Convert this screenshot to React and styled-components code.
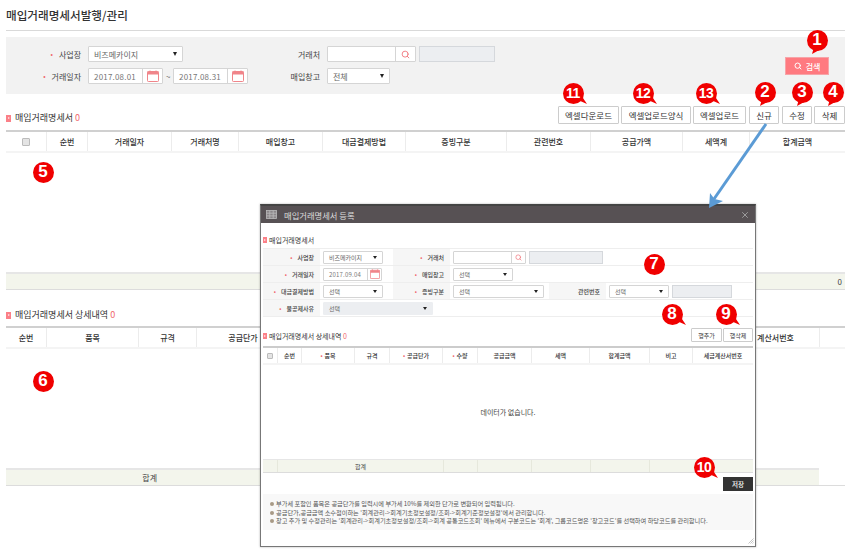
import React from "react";
import styled, { createGlobalStyle } from "styled-components";
import { Search, X } from "lucide-react";

const GlobalStyle = createGlobalStyle`
  html, body { margin: 0; padding: 0; background: #fff; }
  * { box-sizing: border-box; }
  body { font-family: "Noto Sans CJK KR", "Noto Sans", sans-serif; color: #333; }
`;

const Page = styled.div`
  position: relative;
  width: 850px;
  height: 554px;
  overflow: hidden;
  padding: 0 5px 0 6px;
`;

const PageTitle = styled.h1`
  margin: 0;
  height: 31px;
  padding-top: 5px;
  border-bottom: 1px solid #d9d9d9;
  font-size: 11.6px;
  line-height: 20px;
  font-weight: 500;
  color: #333;
`;

const SearchPanel = styled.div`
  margin-top: 6px;
  height: 57px;
  background: #f2f2f2;
  display: flex;
  justify-content: space-between;
  padding: 9px 16px 0 0;
`;

const SearchGrid = styled.div`
  display: grid;
  grid-template-columns: 75px 160px 65px auto;
  grid-auto-rows: 16px;
  column-gap: 7px;
  row-gap: 6px;
`;

const Label = styled.label`
  display: flex;
  align-items: center;
  justify-content: flex-end;
  font-size: 8px;
  color: #444;
  white-space: nowrap;
  ${(p) => p.$req && `&::before { content: "•"; color: #f0686e; margin-right: 6px; font-size: 7px; }`}
`;

const FieldRow = styled.div`
  display: flex;
  align-items: center;
  gap: 3px;
`;

const Select = styled.div`
  width: ${(p) => p.$w}px;
  height: ${(p) => p.$h || 16}px;
  display: flex;
  align-items: center;
  justify-content: space-between;
  padding: 0 5px;
  background: ${(p) => (p.$disabled ? "#eceef1" : "#fff")};
  border: 1px solid ${(p) => (p.$disabled ? "#eceef1" : "#d5d5d5")};
  border-radius: 1px;
  font-size: ${(p) => p.$fs || 8}px;
  color: #666;
  white-space: nowrap;
  &::after {
    content: "";
    border-left: ${(p) => (p.$fs ? 2 : 2.5)}px solid transparent;
    border-right: ${(p) => (p.$fs ? 2 : 2.5)}px solid transparent;
    border-top: ${(p) => (p.$fs ? 3 : 4)}px solid #222;
  }
`;

const InputGroup = styled.div`
  display: flex;
  height: ${(p) => p.$h || 16}px;
  width: ${(p) => p.$w}px;
  background: #fff;
  border: 1px solid #d5d5d5;
  border-radius: 1px;
  font-size: ${(p) => p.$fs || 8}px;
  color: #777;
  letter-spacing: 0.2px;
  align-items: center;
`;

const InputText = styled.span`
  flex: 1;
  padding-left: 5px;
  white-space: nowrap;
`;

const IconCell = styled.span`
  width: ${(p) => p.$w}px;
  height: 100%;
  display: flex;
  align-items: center;
  justify-content: center;
  border-left: 1px solid #d5d5d5;
  color: #f0757c;
`;

const ReadOnly = styled.div`
  width: ${(p) => p.$w}px;
  height: ${(p) => p.$h || 16}px;
  background: #eceef1;
  border: 1px solid #d5d8dc;
`;

const Dash = styled.span`
  width: 4px;
  text-align: center;
  font-size: 8px;
  color: #666;
`;

const SearchButton = styled.button`
  width: 44px;
  height: 18px;
  margin-top: 11px;
  border: 1px solid #f7a4a8;
  background: #ff7a80;
  color: #fff;
  font: 500 8px "Noto Sans CJK KR", sans-serif;
  display: flex;
  align-items: center;
  justify-content: center;
  gap: 4px;
  padding: 0;
`;

const ToolRow = styled.div`
  height: ${(p) => p.$h}px;
  display: flex;
  align-items: flex-end;
  justify-content: space-between;
  padding-bottom: ${(p) => p.$pb}px;
`;

const SectionTitle = styled.div`
  display: flex;
  align-items: center;
  gap: ${(p) => p.$gap ?? 4}px;
  font-size: ${(p) => p.$fs || 9}px;
  line-height: 12px;
  color: #333;
  white-space: nowrap;
  em { font-style: normal; color: #f0686e; }
`;

const Marker = styled.span`
  flex: none;
  width: ${(p) => p.$s || 5}px;
  height: ${(p) => (p.$s || 5) + 2}px;
  background: #fb8088;
  position: relative;
  &::after {
    content: "";
    position: absolute;
    left: 35%;
    top: 30%;
    border-left: 2px solid #ffe6e8;
    border-top: 1.5px solid transparent;
    border-bottom: 1.5px solid transparent;
  }
`;

const ButtonBar = styled.div`
  display: flex;
  gap: ${(p) => p.$gap ?? 2}px;
`;

const ToolButton = styled.button`
  width: ${(p) => p.$w}px;
  height: ${(p) => p.$h || 18}px;
  padding: 0;
  background: #fff;
  border: 1px solid #ccc;
  border-radius: 1px;
  font: ${(p) => p.$fs || 8.5}px "Noto Sans CJK KR", sans-serif;
  color: #333;
  margin-left: ${(p) => p.$ml || 0}px;
  white-space: nowrap;
`;

const HeadRow = styled.div`
  display: grid;
  grid-template-columns: ${(p) => p.$cols};
  height: ${(p) => p.$h}px;
  border-top: 2px solid ${(p) => p.$line || "#d0d0d0"};
  border-bottom: 2px solid #f4f4f4;
  box-sizing: content-box;
`;

const HeadCell = styled.div`
  display: flex;
  align-items: center;
  justify-content: center;
  font-size: ${(p) => p.$fs || 8}px;
  font-weight: 500;
  color: #333;
  border-right: 1px solid #ececec;
  white-space: nowrap;
  overflow: hidden;
  &:last-child { border-right: 0; }
  ${(p) => p.$req && `&::before { content: "•"; color: #f0686e; margin-right: 2px; }`}
`;

const Check = styled.span`
  width: ${(p) => p.$s}px;
  height: ${(p) => p.$s}px;
  background: #e4e4e4;
  border: 1px solid #bbb;
  border-radius: 1px;
`;

const ListBody = styled.div`
  height: ${(p) => p.$h}px;
`;

const TotalBar = styled.div`
  height: 17px;
  width: ${(p) => p.$w || "auto"};
  display: flex;
  align-items: center;
  justify-content: flex-end;
  background: #f3f5ec;
  border-top: 2px solid #e6e6e6;
  font-size: 8px;
  color: #444;
  padding-right: ${(p) => (p.$w ? 0 : 3)}px;
`;

const TotalLine = styled.div`
  border-bottom: 1px solid #dcdcdc;
`;

const TotalLabel = styled.span`
  width: 100%;
  padding-right: ${(p) => p.$pr}px;
  text-align: right;
`;

const Modal = styled.section`
  position: absolute;
  left: 260px;
  top: 204px;
  width: 496px;
  height: 343px;
  background: #fff;
  border: 1px solid #777;
  border-top: 2px solid #444;
  display: flex;
  flex-direction: column;
  box-shadow: 0 0 2px rgba(0, 0, 0, 0.3);
`;

const ModalHeader = styled.header`
  height: 17px;
  flex: none;
  background: #575154;
  display: flex;
  align-items: center;
  padding: 0 5px;
  gap: 7px;
  color: #ddd;
  font-size: 8.3px;
`;

const ModalTitle = styled.span`
  flex: 1;
`;

const ModalBody = styled.div`
  flex: 1;
  position: relative;
  padding: 0 2px;
  display: flex;
  flex-direction: column;
`;

const ModalSection = styled.div`
  height: 25px;
  padding-bottom: 2px;
  display: flex;
  align-items: flex-end;
  justify-content: space-between;
`;

const FormGrid = styled.div`
  display: grid;
  grid-template-columns: 57px 73px 57px 99px 57px 1fr;
  grid-auto-rows: 17px;
  border-top: 1px solid #eee;
`;

const FormLabel = styled.div`
  display: flex;
  align-items: center;
  justify-content: flex-end;
  padding-right: 6px;
  background: #f6f6f6;
  border-bottom: 1px solid #eee;
  font-size: 6px;
  font-weight: 500;
  color: #444;
  white-space: nowrap;
  ${(p) => p.$req && `&::before { content: "•"; color: #f0686e; margin-right: 5px; }`}
`;

const FormField = styled.div`
  grid-column: span ${(p) => p.$span || 1};
  display: flex;
  align-items: center;
  gap: 3px;
  padding-left: ${(p) => p.$pl ?? 3}px;
  border-bottom: 1px solid #eee;
`;

const SubHead = styled.div`
  height: 29px;
  padding-bottom: 4px;
  display: flex;
  align-items: flex-end;
  justify-content: space-between;
`;

const EmptyBody = styled.div`
  height: 94px;
  display: flex;
  align-items: center;
  justify-content: center;
  font-size: 7px;
  color: #444;
`;

const ModalTotal = styled.div`
  height: 12px;
  display: grid;
  grid-template-columns: 15px 166px 34px 54px 59px 59px 1fr;
  background: #f3f5ec;
  border-top: 1px solid #e6e6e6;
  border-bottom: 1px solid #dcdcdc;
  box-sizing: content-box;
`;

const ModalTotalCell = styled.div`
  display: flex;
  align-items: center;
  justify-content: center;
  font-size: 6px;
  color: #444;
  border-right: 1px solid #e6e8dc;
  &:last-child { border-right: 0; }
`;

const SaveRow = styled.div`
  display: flex;
  justify-content: flex-end;
  padding-top: 4px;
  height: 21px;
`;

const SaveButton = styled.button`
  width: 30px;
  height: 14px;
  padding: 0;
  border: 0;
  background: #333;
  color: #fff;
  font: 500 6.5px "Noto Sans CJK KR", sans-serif;
`;

const Notes = styled.div`
  height: 36px;
  background: #f8f8f8;
  padding: 6px 0 0 7px;
`;

const Note = styled.p`
  margin: 0;
  height: 8.5px;
  display: flex;
  align-items: center;
  gap: 2px;
  font-size: 6.2px;
  line-height: 8.5px;
  color: #555;
  white-space: nowrap;
  &::before {
    content: "";
    width: 4px;
    height: 4px;
    flex: none;
    border-radius: 50%;
    background: #a89a86;
  }
`;

const Grip = styled.svg`
  position: absolute;
  right: 1px;
  bottom: 2px;
`;

const BadgeBox = styled.div`
  position: absolute;
  left: ${(p) => p.$x - 10.5}px;
  top: ${(p) => p.$y - 10.5}px;
  width: 21px;
  height: 21px;
  display: flex;
  align-items: center;
  justify-content: center;
  font: 700 ${(p) => p.$fs}px "Liberation Sans", Arial, sans-serif;
  letter-spacing: ${(p) => p.$ls}px;
  color: #fff;
  z-index: 5;
`;

const BadgeShape = styled.svg`
  position: absolute;
  left: 0;
  top: 0;
  overflow: visible;
`;

const BadgeNum = styled.span`
  position: relative;
`;

const Arrow = styled.svg`
  position: absolute;
  left: 700px;
  top: 120px;
  z-index: 4;
`;

const tails = {
  right: "M15 17 L24 21 L18 12 Z",
  down: "M7 17 L5 24 L14 19 Z",
};

const Badge = ({ x, y, n, tail }) => {
  const s = String(n);
  return (
    <BadgeBox $x={x} $y={y} $fs={s.length > 1 ? 14 : 17} $ls={s.length > 1 ? -0.5 : 0}>
      <BadgeShape width="21" height="21" viewBox="0 0 21 21">
        <circle cx="10.5" cy="10.5" r="10.5" fill="#f00000" />
        {tail && <path d={tails[tail]} fill="#f00000" />}
      </BadgeShape>
      <BadgeNum>{s}</BadgeNum>
    </BadgeBox>
  );
};

const CalendarIcon = ({ size = 12 }) => (
  <svg width={size} height={size} viewBox="0 0 12 12" fill="none">
    <rect x="0.5" y="1.5" width="11" height="10" rx="0.8" fill="#fff" stroke="#f0858a" />
    <rect x="0.5" y="1.5" width="11" height="3" fill="#f0858a" />
    <path d="M3 0.5v2M9 0.5v2" stroke="#f0858a" />
  </svg>
);

const GridIcon = () => (
  <svg width="11" height="9" viewBox="0 0 11 9" fill="none" stroke="#bbb" strokeWidth="0.8">
    <rect x="0.5" y="0.5" width="10" height="8" fill="#8b8689" />
    <path d="M0.5 3.2h10M0.5 5.9h10M3.8 0.5v8M7.2 0.5v8" />
  </svg>
);

const topCols = "41px 41px 84px 67px 84px 83px 101px 84px 92px 67px 95px";
const topHeads = ["순번", "거래일자", "거래처명", "매입창고", "대금결제방법", "증빙구분", "관련번호", "공급가액", "세액계", "합계금액"];
// the columns between 공급단가 and 계산서번호 are covered by the popup
const detailCols = "41px 92px 58px 93px 442px 88px 25px";
const detailHeads = ["순번", "품목", "규격", "공급단가", "", "계산서번호", ""];
const modalCols = "15px 24px 53px 35px 53px 35px 54px 58px 60px 43px 60px";
const modalHeads = [
  ["순번"], ["품목", true], ["규격"], ["공급단가", true], ["수량", true],
  ["공급금액"], ["세액"], ["합계금액"], ["비고"], ["세금계산서번호"],
];

export default function App() {
  return (
    <Page>
      <GlobalStyle />
      <PageTitle>매입거래명세서발행/관리</PageTitle>

      <SearchPanel>
        <SearchGrid>
          <Label $req>사업장</Label>
          <Select $w={95}>비즈메카이지</Select>
          <Label>거래처</Label>
          <FieldRow>
            <InputGroup $w={89}>
              <InputText />
              <IconCell $w={20}><Search size={9} strokeWidth={2.4} /></IconCell>
            </InputGroup>
            <ReadOnly $w={76} />
          </FieldRow>
          <Label $req>거래일자</Label>
          <FieldRow>
            <InputGroup $w={76}>
              <InputText>2017.08.01</InputText>
              <IconCell $w={20}><CalendarIcon /></IconCell>
            </InputGroup>
            <Dash>~</Dash>
            <InputGroup $w={76}>
              <InputText>2017.08.31</InputText>
              <IconCell $w={20}><CalendarIcon /></IconCell>
            </InputGroup>
          </FieldRow>
          <Label>매입창고</Label>
          <Select $w={63}>전체</Select>
        </SearchGrid>
        <SearchButton>
          <Search size={8} strokeWidth={3} />
          검색
        </SearchButton>
      </SearchPanel>

      <ToolRow $h={36} $pb={6}>
        <SectionTitle>
          <Marker />
          <span>매입거래명세서 <em>0</em></span>
        </SectionTitle>
        <ButtonBar>
          <ToolButton $w={61}>엑셀다운로드</ToolButton>
          <ToolButton $w={70}>엑셀업로드양식</ToolButton>
          <ToolButton $w={53}>엑셀업로드</ToolButton>
          <ToolButton $w={30} $ml={1}>신규</ToolButton>
          <ToolButton $w={30} $ml={1}>수정</ToolButton>
          <ToolButton $w={31}>삭제</ToolButton>
        </ButtonBar>
      </ToolRow>

      <HeadRow $cols={topCols} $h={19}>
        <HeadCell><Check $s={8} /></HeadCell>
        {topHeads.map((h) => <HeadCell key={h}>{h}</HeadCell>)}
      </HeadRow>
      <ListBody $h={119} />
      <TotalLine>
        <TotalBar><span>0</span></TotalBar>
      </TotalLine>

      <ToolRow $h={36} $pb={5}>
        <SectionTitle>
          <Marker />
          <span>매입거래명세서 상세내역 <em>0</em></span>
        </SectionTitle>
      </ToolRow>
      <HeadRow $cols={detailCols} $h={19}>
        {detailHeads.map((h, i) => <HeadCell key={i}>{h}</HeadCell>)}
      </HeadRow>
      <ListBody $h={119} />
      <TotalLine>
        <TotalBar $w="813px"><TotalLabel $pr={662}>합계</TotalLabel></TotalBar>
      </TotalLine>

      <Arrow width="80" height="95" viewBox="0 0 80 95">
        <path d="M66 4 L14 79" stroke="#5b9bd5" strokeWidth="3" />
        <path d="M9 88 L10 73 L14.5 79 L23 81 Z" fill="#5b9bd5" />
      </Arrow>

      <Modal>
        <ModalHeader>
          <GridIcon />
          <ModalTitle>매입거래명세서 등록</ModalTitle>
          <X size={10} color="#aaa" />
        </ModalHeader>
        <ModalBody>
          <ModalSection>
            <SectionTitle $fs={7} $gap={2}>
              <Marker $s={4} />
              <span>매입거래명세서</span>
            </SectionTitle>
          </ModalSection>
          <FormGrid>
            <FormLabel $req>사업장</FormLabel>
            <FormField><Select $w={60} $h={13} $fs={6}>비즈메카이지</Select></FormField>
            <FormLabel $req>거래처</FormLabel>
            <FormField $span={3}>
              <InputGroup $w={73} $h={13} $fs={6}>
                <InputText />
                <IconCell $w={14}><Search size={7} strokeWidth={2.4} /></IconCell>
              </InputGroup>
              <ReadOnly $w={74} $h={13} />
            </FormField>

            <FormLabel $req>거래일자</FormLabel>
            <FormField>
              <InputGroup $w={59} $h={13} $fs={6}>
                <InputText>2017.09.04</InputText>
                <IconCell $w={14}><CalendarIcon size={10} /></IconCell>
              </InputGroup>
            </FormField>
            <FormLabel $req>매입창고</FormLabel>
            <FormField $span={3}><Select $w={60} $h={13} $fs={6}>선택</Select></FormField>

            <FormLabel $req>대금결제방법</FormLabel>
            <FormField><Select $w={60} $h={13} $fs={6}>선택</Select></FormField>
            <FormLabel $req>증빙구분</FormLabel>
            <FormField><Select $w={91} $h={13} $fs={6}>선택</Select></FormField>
            <FormLabel>관련번호</FormLabel>
            <FormField>
              <Select $w={60} $h={13} $fs={6}>선택</Select>
              <ReadOnly $w={60} $h={13} />
            </FormField>

            <FormLabel $req>불공제사유</FormLabel>
            <FormField $span={5}><Select $w={110} $h={13} $fs={6} $disabled>선택</Select></FormField>
          </FormGrid>

          <SubHead>
            <SectionTitle $fs={7} $gap={2}>
              <Marker $s={4} />
              <span>매입거래명세서 상세내역 <em>0</em></span>
            </SectionTitle>
            <ButtonBar $gap={1}>
              <ToolButton $w={31} $h={14} $fs={6}>행추가</ToolButton>
              <ToolButton $w={30} $h={14} $fs={6}>행삭제</ToolButton>
            </ButtonBar>
          </SubHead>

          <HeadRow $cols={modalCols} $h={15} $line="#ccc">
            <HeadCell><Check $s={6} /></HeadCell>
            {modalHeads.map(([h, req]) => <HeadCell key={h} $fs={6} $req={req}>{h}</HeadCell>)}
          </HeadRow>
          <EmptyBody>데이터가 없습니다.</EmptyBody>
          <ModalTotal>
            <ModalTotalCell />
            <ModalTotalCell>합계</ModalTotalCell>
            <ModalTotalCell />
            <ModalTotalCell />
            <ModalTotalCell />
            <ModalTotalCell />
            <ModalTotalCell />
          </ModalTotal>
          <SaveRow><SaveButton>저장</SaveButton></SaveRow>
          <Notes>
            <Note>부가세 포함인 품목은 공급단가를 입력시에 부가세 10%를 제외한 단가로 변환되어 입력됩니다.</Note>
            <Note>공급단가,공급금액 소수점이하는 '회계관리-&gt;회계기초정보설정/조회-&gt;회계기준정보설정'에서 관리합니다.</Note>
            <Note>창고 추가 및 수정관리는 '회계관리-&gt;회계기초정보설정/조회-&gt;회계 공통코드조회' 메뉴에서 구분코드는 '회계', 그룹코드명은 '창고코드'를 선택하여 하당코드를 관리합니다.</Note>
          </Notes>
          <Grip width="6" height="6" viewBox="0 0 6 6" stroke="#aaa" strokeWidth="0.7">
            <path d="M0.5 5.5L5.5 0.5M2.5 5.5L5.5 2.5M4.5 5.5L5.5 4.5" />
          </Grip>
        </ModalBody>
      </Modal>

      <Badge x={817} y={40} n={1} tail="down" />
      <Badge x={765} y={92} n={2} tail="down" />
      <Badge x={802} y={92} n={3} tail="down" />
      <Badge x={833} y={92} n={4} tail="down" />
      <Badge x={43} y={172} n={5} />
      <Badge x={43} y={381} n={6} />
      <Badge x={654} y={264} n={7} />
      <Badge x={672} y={314} n={8} tail="right" />
      <Badge x={726} y={314} n={9} tail="right" />
      <Badge x={704} y={467} n={10} tail="right" />
      <Badge x={573} y={93} n={11} tail="right" />
      <Badge x={643} y={93} n={12} tail="right" />
      <Badge x={706} y={93} n={13} tail="right" />
    </Page>
  );
}
